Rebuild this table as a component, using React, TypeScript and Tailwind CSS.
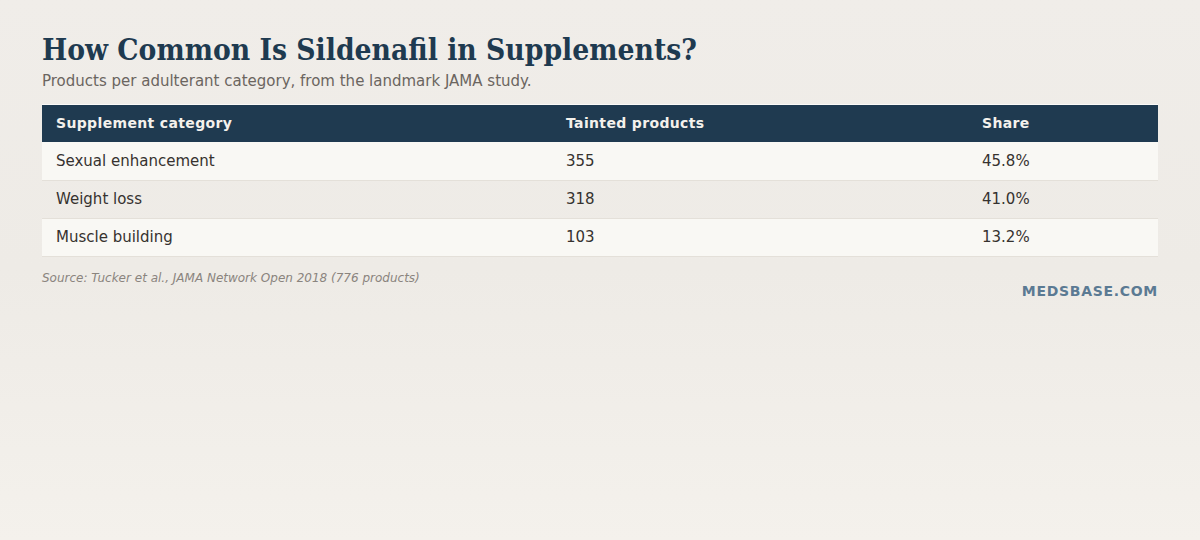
import React from 'react'

type Row = { category: string; count: string; share: string }

const rows: Row[] = [
  { category: 'Sexual enhancement', count: '355', share: '45.8%' },
  { category: 'Weight loss', count: '318', share: '41.0%' },
  { category: 'Muscle building', count: '103', share: '13.2%' },
]

export default function App() {
  return (
    <div className="min-h-[540px] w-[1200px] bg-gradient-to-b from-[#f0ede9] via-[#eeebe6] to-[#f4f1ec] px-[42px] pt-[32px] font-['DejaVu_Sans',sans-serif]">
      <h1 className="font-['DejaVu_Serif',serif] text-[29.7px] font-bold leading-[36px] text-[#1e3a50] [font-stretch:condensed]">
        How Common Is Sildenafil in Supplements?
      </h1>
      <p className="mt-[3px] text-[15px] leading-[20px] text-[#6b6560]">
        Products per adulterant category, from the landmark JAMA study.
      </p>

      <table className="mt-[14px] w-full table-fixed border-collapse shadow-[0_-1px_0_#fbfaf8]">
        <colgroup>
          <col className="w-[510px]" />
          <col className="w-[416px]" />
          <col />
        </colgroup>
        <thead>
          <tr className="bg-[#1f3a50] text-left text-[14px] font-bold tracking-[0.025em] text-[#f4f1ec]">
            <th className="h-[37px] px-[14px] font-bold">Supplement category</th>
            <th className="h-[37px] px-[14px] font-bold">Tainted products</th>
            <th className="h-[37px] px-[14px] font-bold">Share</th>
          </tr>
        </thead>
        <tbody>
          {rows.map((r, i) => (
            <tr
              key={r.category}
              className={
                i % 2 === 0
                  ? 'border-b border-[#e4e0d9] bg-[#f9f8f4] text-[15px] text-[#36322f]'
                  : 'border-b border-[#e4e0d9] text-[15px] text-[#36322f]'
              }
            >
              <td className="h-[38px] px-[14px]">{r.category}</td>
              <td className="h-[38px] px-[14px]">{r.count}</td>
              <td className="h-[38px] px-[14px]">{r.share}</td>
            </tr>
          ))}
        </tbody>
      </table>

      <div className="mt-[13px] flex items-start justify-between">
        <p className="text-[12px] italic leading-[16px] text-[#8a847e]">
          Source: Tucker et al., JAMA Network Open 2018 (776 products)
        </p>
        <p className="mt-[13px] text-[14px] font-bold leading-[16px] tracking-[0.05em] text-[#5b7a93]">
          MEDSBASE.COM
        </p>
      </div>
    </div>
  )
}
